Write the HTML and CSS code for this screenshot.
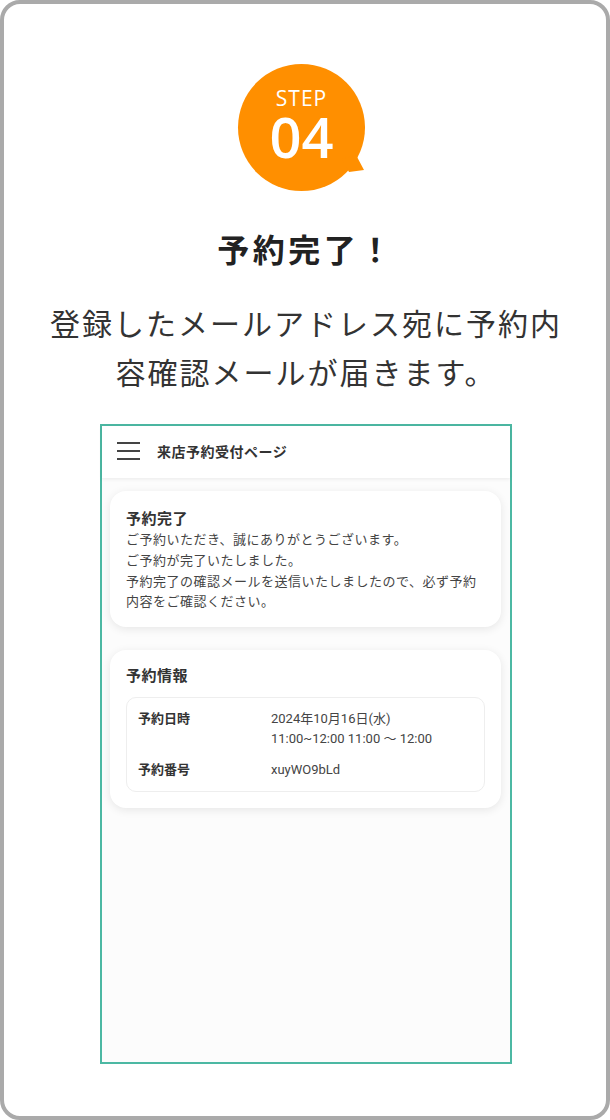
FILE: index.html
```html
<!DOCTYPE html>
<html lang="ja">

<head>
  <meta charset="UTF-8">
  <title>STEP 04 予約完了</title>

  <link rel="stylesheet" href="styles.css">
</head>

<body>
  <div class="frame">
    <div class="badge-wrap">
      <div class="badge">
        <span class="badge-label">STEP</span>
        <span class="badge-num">04</span>
      </div>
    </div>

    <h1 class="title">予約完了！</h1>
    <p class="lead">登録したメールアドレス宛に予約内容確認メールが届きます。</p>

    <div class="phone">
      <div class="phone-header">
        <span class="menu"><i></i><i></i><i></i></span>
        <span class="phone-title">来店予約受付ページ</span>
      </div>

      <div class="phone-body">
        <div class="card">
          <h2 class="card-title">予約完了</h2>
          <p class="card-text">ご予約いただき、誠にありがとうございます。<br>ご予約が完了いたしました。<br>予約完了の確認メールを送信いたしましたので、必ず予約内容をご確認ください。</p>
        </div>

        <div class="card">
          <h2 class="card-title">予約情報</h2>
          <dl class="info">
            <dt>予約日時</dt>
            <dd>2024年10月16日(水)<br>11:00~12:00 11:00 〜 12:00</dd>
            <dt>予約番号</dt>
            <dd>xuyWO9bLd</dd>
          </dl>
        </div>
      </div>
    </div>
  </div>
</body>

</html>
```

FILE: styles.css
```css
body {
  margin: 0;
  background: #fff;
  font-family: "Noto Sans CJK JP", sans-serif;
  color: #333;
}
.frame {
  box-sizing: border-box;
  width: 610px;
  height: 1120px;
  border: 4px solid #aaa;
  border-radius: 20px;
  padding: 60px 39px 0 41px;
  background: #fff;
}
.badge-wrap {
  width: 136px;
  margin: 0 auto;
}
.badge {
  position: relative;
  width: 127px;
  height: 127px;
  border-radius: 50%;
  background: #ff8f00;
  color: #fff;
  font-family: "Open Sans", sans-serif;
  display: flex;
  flex-direction: column;
  align-items: center;
  justify-content: center;
  padding-bottom: 10px;
  box-sizing: border-box;
}
.badge::after {
  content: "";
  position: absolute;
  left: 100px;
  top: 85px;
  width: 30px;
  height: 30px;
  background: #ff8f00;
  clip-path: polygon(18px 6px, 26px 21px, 11px 23px, 4px 10px);
}
.badge-label {
  font-size: 21px;
  line-height: 20px;
  font-weight: 500;
  letter-spacing: 1px;
}
.badge-num {
  margin-top: 6px;
  font-size: 56px;
  line-height: 44px;
  font-weight: 600;
}
.title {
  margin: 33px 0 0;
  text-align: center;
  font-size: 32px;
  line-height: 48px;
  font-weight: 700;
  letter-spacing: 3.5px;
  color: #222;
}
.lead {
  margin: 26px 0 0;
  text-align: center;
  font-size: 30px;
  line-height: 49px;
  letter-spacing: 2px;
  font-weight: 400;
  color: #333;
}
.phone {
  box-sizing: border-box;
  width: 412px;
  height: 640px;
  margin: 28px auto 0;
  border: 2px solid #4cb8a3;
  background: #fcfcfc;
  font-family: Roboto, "Noto Sans CJK JP", sans-serif;
}
.phone-header {
  box-sizing: border-box;
  height: 52px;
  display: flex;
  align-items: center;
  gap: 17px;
  padding: 0 15px 3px;
  background: #fff;
  box-shadow: 0 1px 4px rgba(0, 0, 0, 0.08);
}
.menu {
  display: flex;
  flex-direction: column;
  gap: 6px;
  width: 23px;
}
.menu i {
  display: block;
  height: 2px;
  background: #444;
}
.phone-title {
  font-size: 14px;
  font-weight: 700;
  letter-spacing: 0.5px;
  color: #333;
}
.phone-body {
  padding: 13px 9px 0 8px;
  display: flex;
  flex-direction: column;
  gap: 23px;
}
.card {
  background: #fff;
  border-radius: 16px;
  box-shadow: 0 2px 10px rgba(0, 0, 0, 0.09);
  padding: 18px 16px 14px;
}
.card + .card {
  padding: 16px 16px 16px;
}
.card-title {
  margin: 0;
  font-size: 15px;
  line-height: 21px;
  font-weight: 700;
  letter-spacing: 0.5px;
  color: #333;
}
.card-text {
  margin: 0;
  font-size: 13px;
  line-height: 20.8px;
  letter-spacing: 0.5px;
  color: #444;
}
.info {
  margin: 10px 0 0;
  border: 1px solid #eee;
  border-radius: 10px;
  padding: 11px 11px;
  display: grid;
  grid-template-columns: 133px 1fr;
  row-gap: 12px;
  font-size: 13px;
  line-height: 19.5px;
}
.info dt {
  font-weight: 700;
  color: #333;
}
.info dd {
  margin: 0;
  color: #444;
}
```
